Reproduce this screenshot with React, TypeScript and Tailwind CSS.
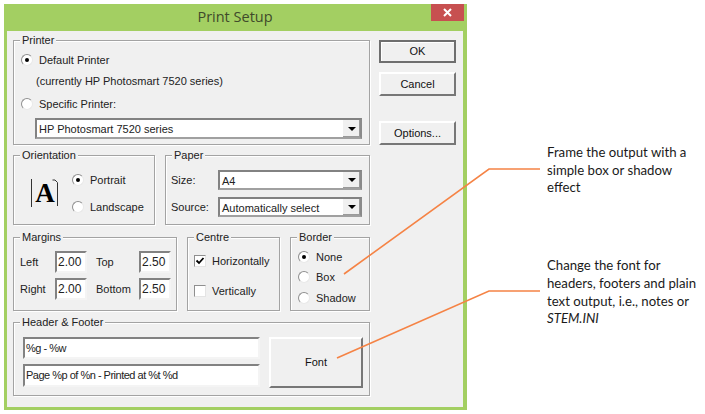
import type { ReactNode } from 'react';

const dialogFont = "[font-family:'Liberation_Sans',Arial,sans-serif]";

function Group({ title, className, children }: { title: string; className: string; children: ReactNode }) {
  return (
    <div className={`relative border border-[#a3a3a3] shadow-[inset_1px_1px_0_#fff,1px_1px_0_#fff] ${className}`}>
      <span className="absolute left-[6px] top-[-8px] bg-[#f0f0f0] px-[2px] text-[11px] leading-[15px] text-[#222]">{title}</span>
      {children}
    </div>
  );
}

function Radio({ checked = false }: { checked?: boolean }) {
  return (
    <span className="flex h-3 w-3 shrink-0 items-center justify-center rounded-full border border-[#8f8f8f] border-r-[#e8e8e8] border-b-[#e8e8e8] bg-white">
      {checked && <span className="h-1 w-1 rounded-full bg-black" />}
    </span>
  );
}

function RadioRow({ label, checked, className }: { label: string; checked?: boolean; className: string }) {
  return (
    <div className={`flex items-center ${className}`}>
      <Radio checked={checked} />
      <span className="ml-[6px] whitespace-nowrap">{label}</span>
    </div>
  );
}

function Check({ label, checked, className }: { label: string; checked?: boolean; className: string }) {
  return (
    <div className={`flex items-center ${className}`}>
      <span className="flex h-3 w-3 shrink-0 items-center justify-center border border-[#8f8f8f] border-r-[#e4e4e4] border-b-[#e4e4e4] bg-white">
        {checked && (
          <svg width="10" height="10" viewBox="0 0 10 10">
            <path d="M1.5 4.5 L4 7 L8.5 2" fill="none" stroke="#000" strokeWidth="1.8" />
          </svg>
        )}
      </span>
      <span className="ml-[6px] whitespace-nowrap">{label}</span>
    </div>
  );
}

function Combo({ value, className }: { value: string; className: string }) {
  return (
    <div className={`flex items-stretch border-2 border-[#828282] border-r-[#8a8a8a] border-b-[#a0a0a0] bg-white ${className}`}>
      <span className="flex-1 truncate pl-[2px] pt-[1px] leading-[17px]">{value}</span>
      <span className="flex w-[17px] items-center justify-center bg-[#f0f0f0] shadow-[inset_-1px_-1px_0_#9a9a9a]">
        <svg width="8" height="4" viewBox="0 0 8 4">
          <path d="M0 0 H8 L4 4 Z" fill="#000" />
        </svg>
      </span>
    </div>
  );
}

function Field({ value, className }: { value: string; className: string }) {
  return (
    <div className={`border-2 border-[#828282] border-r-[#f4f4f4] border-b-[#f4f4f4] bg-white pl-[1px] leading-[18px] whitespace-nowrap ${className}`}>
      {value}
    </div>
  );
}

function Button({ label, className }: { label: string; className: string }) {
  return (
    <div className={`flex items-center justify-center bg-[#f0f0f0] text-[#111] ${className}`}>{label}</div>
  );
}

const raised = 'border-2 border-white border-r-[#777] border-b-[#777]';

export default function App() {
  return (
    <div className="relative flex h-[414px] w-[705px] overflow-hidden bg-white">
      <div className={`ml-[4px] mt-[4px] flex h-[406px] w-[463px] shrink-0 flex-col bg-[#a3cf62] pb-[3px] pl-[3px] pr-[4px] ${dialogFont}`}>
        <div className="relative flex h-[27px] shrink-0 items-center justify-center pb-[2px] text-[14.5px] text-[#3f4a2b] [font-family:'Open_Sans',sans-serif]">
          Print Setup
          <span className="absolute right-[-1px] top-0 flex h-[17px] w-[33px] items-center justify-center bg-[#c75050]">
            <svg width="9" height="9" viewBox="0 0 9 9">
              <path d="M1 1 L8 8 M8 1 L1 8" stroke="#fff" strokeWidth="2" />
            </svg>
          </span>
        </div>

        <div className="flex flex-1 gap-[9px] bg-[#f0f0f0] pl-[6px] pt-[9px] text-[11px] text-[#222]">
          <div className="flex w-[357px] shrink-0 flex-col">
            <Group title="Printer" className="h-[105px] pl-[7px] pt-[9px]">
              <RadioRow label="Default Printer" checked className="h-[20px]" />
              <div className="flex h-[22px] items-center pl-[15px] whitespace-nowrap">(currently HP Photosmart 7520 series)</div>
              <RadioRow label="Specific Printer:" className="h-[24px]" />
              <Combo value="HP Photosmart 7520 series" className="ml-[14px] mt-[2px] h-[21px] w-[327px]" />
            </Group>

            <div className="mt-[10px] flex h-[70px] gap-[10px]">
              <Group title="Orientation" className="flex w-[142px] shrink-0 pl-[17px] pt-[15px]">
                <div className="relative mt-[8px] flex h-[28px] w-[27px] shrink-0 items-center justify-center self-start border-l border-l-[#333]">
                  <span className="text-[27px] leading-[26px] font-bold text-black [font-family:'Liberation_Serif',serif]">A</span>
                  <svg className="absolute right-0 top-0" width="6" height="28" viewBox="0 0 6 28">
                    <path d="M0.5 1 H3 L5.5 3.5 V27" fill="none" stroke="#333" />
                  </svg>
                </div>
                <div className="ml-[14px] flex flex-col">
                  <RadioRow label="Portrait" checked className="h-[18px]" />
                  <RadioRow label="Landscape" className="mt-[9px] h-[18px]" />
                </div>
              </Group>
              <Group title="Paper" className="flex-1 pl-[5px] pt-[14px]">
                <div className="flex h-[20px] items-center">
                  <span className="w-[47px] pt-[1px]">Size:</span>
                  <Combo value="A4" className="h-[20px] w-[144px]" />
                </div>
                <div className="mt-[7px] flex h-[20px] items-center">
                  <span className="w-[47px] pt-[1px]">Source:</span>
                  <Combo value="Automatically select" className="h-[20px] w-[144px]" />
                </div>
              </Group>
            </div>

            <div className="mt-[12px] flex h-[74px] gap-[10px]">
              <Group title="Margins" className="w-[164px] shrink-0 pl-[6px] pt-[13px]">
                <div className="grid grid-cols-[35px_32px_9px_43px_32px] grid-rows-[22px_22px] items-center gap-y-[5px]">
                  <span>Left</span>
                  <Field value="2.00" className="h-[22px] text-[12px]" />
                  <span />
                  <span>Top</span>
                  <Field value="2.50" className="h-[22px] text-[12px]" />
                  <span>Right</span>
                  <Field value="2.00" className="h-[22px] text-[12px]" />
                  <span />
                  <span>Bottom</span>
                  <Field value="2.50" className="h-[22px] text-[12px]" />
                </div>
              </Group>
              <Group title="Centre" className="w-[93px] shrink-0 pl-[6px] pt-[14px]">
                <Check label="Horizontally" checked className="h-[18px]" />
                <Check label="Vertically" className="mt-[12px] h-[18px]" />
              </Group>
              <Group title="Border" className="flex-1 pl-[7px] pt-[9px]">
                <RadioRow label="None" checked className="h-[20px]" />
                <RadioRow label="Box" className="h-[20px]" />
                <RadioRow label="Shadow" className="mt-[1px] h-[20px]" />
              </Group>
            </div>

            <Group title="Header & Footer" className="mt-[11px] flex h-[74px] pl-[9px] pt-[14px]">
              <div className="flex w-[237px] shrink-0 flex-col gap-[5px]">
                <Field value="%g - %w" className="h-[22px] tracking-[-0.5px]" />
                <Field value="Page %p of %n - Printed at %t %d" className="h-[23px] tracking-[-0.5px]" />
              </div>
              <Button label="Font" className={`ml-[9px] h-[51px] w-[94px] ${raised}`} />
            </Group>
          </div>

          <div className="flex w-[77px] shrink-0 flex-col">
            <Button label="OK" className="h-[23px] border-2 border-[#6e6e6e] shadow-[inset_1px_1px_0_#fff]" />
            <Button label="Cancel" className={`mt-[9px] h-[24px] ${raised}`} />
            <Button label="Options..." className={`mt-[25px] h-[24px] ${raised}`} />
          </div>
        </div>
      </div>

      <div className="ml-[80px] flex flex-col pt-[144px] text-[13.2px] leading-[17.7px] text-[#1a1a1a] [font-family:'Lato',sans-serif]">
        <p className="w-[155px]">Frame the output with a simple box or shadow effect</p>
        <p className="mt-[60px] w-[158px]">
          Change the font for headers, footers and plain text output, i.e., notes or <em>STEM.INI</em>
        </p>
      </div>

      <svg className="pointer-events-none absolute inset-0" width="705" height="414" viewBox="0 0 705 414">
        <path d="M344 274 L489 169 H540" fill="none" stroke="#f58345" strokeWidth="1.6" />
        <path d="M337 358 L489 291 H540" fill="none" stroke="#f58345" strokeWidth="1.6" />
      </svg>
    </div>
  );
}
